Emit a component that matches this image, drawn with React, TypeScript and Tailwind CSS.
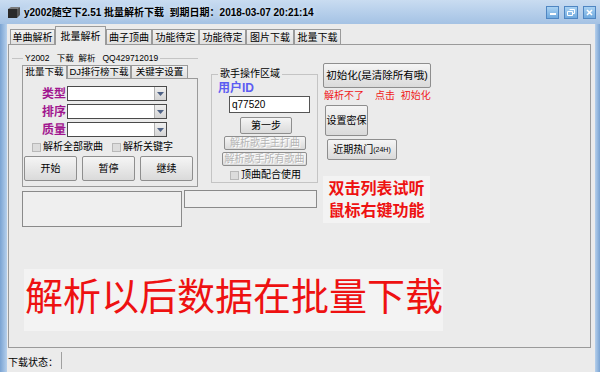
import React from "react";

const font = "font-['Liberation_Sans','Noto_Sans_CJK_SC',sans-serif]";

type BtnProps = {
  children: React.ReactNode;
  className?: string;
  disabled?: boolean;
};

function Btn({ children, className = "", disabled }: BtnProps) {
  return (
    <div
      className={`flex items-center justify-center whitespace-nowrap rounded-[2px] border border-[#8e8e8e] bg-gradient-to-b from-[#f5f5f5] to-[#dadada] leading-none ${
        disabled ? "text-[#b4b4b4] [text-shadow:1px_1px_0_#ffffff]" : "text-black"
      } ${className}`}
    >
      {children}
    </div>
  );
}

function Check({ label, className = "" }: { label: string; className?: string }) {
  return (
    <div className={`flex items-center gap-[2px] whitespace-nowrap ${className}`}>
      <span className="h-[9px] w-[9px] border border-[#b8b8b8] bg-[#dcdcdc]" />
      <span className="leading-none">{label}</span>
    </div>
  );
}

function Combo() {
  return (
    <div className="flex h-[15px] w-[100px] border border-[#4a4a4a] bg-white">
      <div className="flex-1" />
      <div className="flex w-[12px] items-center justify-center border-l border-[#b0b0b0] bg-gradient-to-b from-[#f0f0f0] to-[#d4d4d4]">
        <svg width="7" height="4" viewBox="0 0 7 4">
          <path d="M0 0h7L3.5 4z" fill="#4d6185" />
        </svg>
      </div>
    </div>
  );
}

const mainTabs = [
  { label: "单曲解析", w: "w-[45px]" },
  { label: "批量解析", w: "w-[51px]", active: true },
  { label: "曲子顶曲", w: "w-[46px]" },
  { label: "功能待定", w: "w-[47px]" },
  { label: "功能待定", w: "w-[47px]" },
  { label: "图片下载", w: "w-[48px]" },
  { label: "批量下载", w: "w-[47px]" },
];

export default function App() {
  return (
    <div className={`flex h-[372px] w-[600px] flex-col overflow-hidden bg-[#8db2dc] text-[10px] text-black ${font}`}>
      {/* title bar */}
      <div className="flex h-[24px] items-center bg-gradient-to-b from-[#c9dcf1] to-[#a4c2e4] pl-[8px] pr-[4px]">
        <svg width="12" height="11" viewBox="0 0 12 11" className="mt-[1px]">
          <rect x="0" y="2" width="9" height="9" fill="#2a2a2a" />
          <path d="M0 2L3 0h9L9 2z" fill="#7a7a7a" />
          <path d="M9 2l3-2v8l-3 3z" fill="#555" />
        </svg>
        <span className="ml-[4px] whitespace-nowrap text-[10px] font-bold [text-shadow:0_0_4px_#e8f2fc]">
          y2002随空下2.51 批量解析下载&nbsp;&nbsp;到期日期：2018-03-07 20:21:14
        </span>
        <div className="ml-auto flex gap-[5px]">
          <div className="flex h-[13px] w-[13px] items-end justify-center border border-[#4f86c2] bg-gradient-to-b from-[#a9d2f3] to-[#6fa9de] pb-[3px]">
            <span className="h-[2px] w-[6px] bg-white" />
          </div>
          <div className="flex h-[13px] w-[14px] items-center justify-center border border-[#4f86c2] bg-gradient-to-b from-[#a9d2f3] to-[#6fa9de]">
            <svg width="8" height="7" viewBox="0 0 8 7">
              <path d="M2.5 0.5h5v4h-2M0.5 2.5h5v4h-5z" fill="none" stroke="#fff" />
            </svg>
          </div>
          <div className="flex h-[13px] w-[13px] items-center justify-center border border-[#4f86c2] bg-gradient-to-b from-[#a9d2f3] to-[#6fa9de]">
            <svg width="7" height="7" viewBox="0 0 7 7">
              <path d="M1 1l5 5M6 1L1 6" stroke="#fff" strokeWidth="1.6" />
            </svg>
          </div>
        </div>
      </div>

      <div className="flex min-h-0 flex-1">
        <div className="w-[7px] bg-gradient-to-r from-[#7aa3d2] to-[#b6d0ec]" />

        {/* client area */}
        <div className="flex w-[588px] flex-col bg-[#ebebeb]">
          {/* main tabs */}
          <div className="flex h-[20px] items-end pl-[3px]">
            {mainTabs.map((t, i) => (
              <div
                key={i}
                className={`flex items-center justify-center whitespace-nowrap border border-b-0 border-[#9a9a9a] ${t.w} ${
                  t.active
                    ? "relative z-10 -mb-px h-[19px] bg-[#ebebeb]"
                    : "h-[15px] bg-gradient-to-b from-[#f2f2f2] to-[#e0e0e0]"
                }`}
              >
                {t.label}
              </div>
            ))}
          </div>

          {/* tab page */}
          <div className="ml-[1px] flex h-[304px] w-[583px] flex-col border border-[#9a9a9a]">
            <div className="flex items-start">
              {/* left section */}
              <div className="flex flex-col">
                <div className="flex items-start">
                  {/* group 1 */}
                  <fieldset className="ml-[3px] mt-[7px] w-[186px] border-t border-[#c4c4c4]">
                    <legend className="ml-[11px] whitespace-nowrap px-[2px] text-[8.5px] leading-[12px]">
                      Y2002&nbsp;&nbsp;&nbsp;下载&nbsp;&nbsp;解析&nbsp;&nbsp;&nbsp;QQ429712019
                    </legend>
                    <div className="ml-[10px] mt-px flex h-[13px] items-end whitespace-nowrap text-[9.5px]">
                      <div className="relative z-10 -mb-px flex h-[14px] w-[45px] items-center justify-center border border-b-0 border-[#9a9a9a] bg-[#ebebeb]">
                        批量下载
                      </div>
                      <div className="flex h-[13px] w-[64px] items-center justify-center border border-b-0 border-[#9a9a9a] bg-gradient-to-b from-[#f2f2f2] to-[#e0e0e0]">
                        DJ排行榜下载
                      </div>
                      <div className="flex h-[13px] w-[57px] items-center justify-center border border-b-0 border-[#9a9a9a] bg-gradient-to-b from-[#f2f2f2] to-[#e0e0e0]">
                        关键字设置
                      </div>
                    </div>
                    <div className="ml-[10px] flex h-[109px] w-[176px] flex-col border border-[#9a9a9a]">
                      {["类型", "排序", "质量"].map((l, i) => (
                        <div key={l} className={`flex items-center ${i === 0 ? "mt-[7px]" : "mt-[3px]"}`}>
                          <span className="w-[44px] pr-[1px] text-right text-[12px] font-bold leading-none text-[#a1168f]">
                            {l}
                          </span>
                          <Combo />
                        </div>
                      ))}
                      <div className="mt-[4px] flex h-[12px] items-center">
                        <Check label="解析全部歌曲" className="ml-[9px]" />
                        <Check label="解析关键字" className="ml-[9px]" />
                      </div>
                      <div className="ml-px mt-[3px] flex gap-[5px]">
                        <Btn className="h-[25px] w-[53px]">开始</Btn>
                        <Btn className="h-[25px] w-[53px]">暂停</Btn>
                        <Btn className="h-[25px] w-[53px]">继续</Btn>
                      </div>
                    </div>
                  </fieldset>

                  {/* group 2 */}
                  <fieldset className="ml-[13px] mt-[23px] h-[115px] w-[107px] border border-[#c4c4c4]">
                    <legend className="ml-[6px] whitespace-nowrap px-[2px] text-[10px] leading-[12px]">歌手操作区域</legend>
                    <div className="ml-[6px] mt-[1px] text-[12px] font-bold leading-[14px] text-[#5c5cf2]">用户ID</div>
                    <div className="ml-[17px] mt-[1px] flex h-[17px] w-[81px] items-center border border-[#555] bg-white pl-[2px] text-[10px]">
                      q77520
                    </div>
                    <Btn className="ml-[28px] mt-[4px] h-[17px] w-[52px]">第一步</Btn>
                    <Btn disabled className="ml-[12px] mt-[2px] h-[14px] w-[82px]">
                      解析歌手主打曲
                    </Btn>
                    <Btn disabled className="ml-[10px] mt-[2px] h-[14px] w-[85px]">
                      解析歌手所有歌曲
                    </Btn>
                    <Check label="顶曲配合使用" className="ml-[18px] mt-[3px] h-[12px]" />
                  </fieldset>
                </div>

                {/* lower boxes */}
                <div className="mt-[4px] flex items-start">
                  <div className="ml-[13px] h-[36px] w-[160px] border border-[#8a8a8a] bg-[#efefef]" />
                  <div className="ml-[2px] mt-[-1px] h-[18px] w-[133px] border border-[#8a8a8a] bg-[#efefef]" />
                </div>
              </div>

              {/* right column */}
              <div className="ml-[5px] mt-[18px] flex flex-col">
                <Btn className="h-[25px] w-[108px] text-[10.5px]">初始化(是清除所有哦)</Btn>
                <div className="ml-px mt-[2px] h-[12px] whitespace-nowrap text-[10px] leading-[12px] text-[#f01818]">
                  解析不了&nbsp;&nbsp;&nbsp;&nbsp;点击&nbsp;&nbsp;初始化
                </div>
                <Btn className="ml-[2px] mt-[3px] h-[31px] w-[43px]">设置密保</Btn>
                <Btn className="ml-[4px] mt-[3px] h-[21px] w-[70px]">
                  近期热门<span className="text-[7px]">(24H)</span>
                </Btn>
                <div className="mt-[16px] flex h-[47px] w-[107px] flex-col items-center justify-center bg-[#f3f3f3] text-[16px] font-bold leading-[22px] text-[#ee1212]">
                  <span>双击列表试听</span>
                  <span>鼠标右键功能</span>
                </div>
              </div>
            </div>

            {/* banner */}
            <div className="ml-[15px] mt-[42px] flex h-[62px] w-[419px] items-center whitespace-nowrap bg-[#f3f3f3] pl-[1px] pb-[6px] text-[38px] leading-none text-[#ee1111]">
              解析以后数据在批量下载
            </div>
          </div>

          {/* status bar */}
          <div className="flex flex-1 items-end pb-[3px] pl-[1px]">
            <span className="text-[10px] leading-[12px]">下载状态：</span>
            <span className="ml-[3px] h-[17px] w-px self-end bg-[#a0a0a0]" />
          </div>
        </div>

        <div className="w-[5px] bg-gradient-to-r from-[#b6d0ec] to-[#7aa3d2]" />
      </div>
    </div>
  );
}
